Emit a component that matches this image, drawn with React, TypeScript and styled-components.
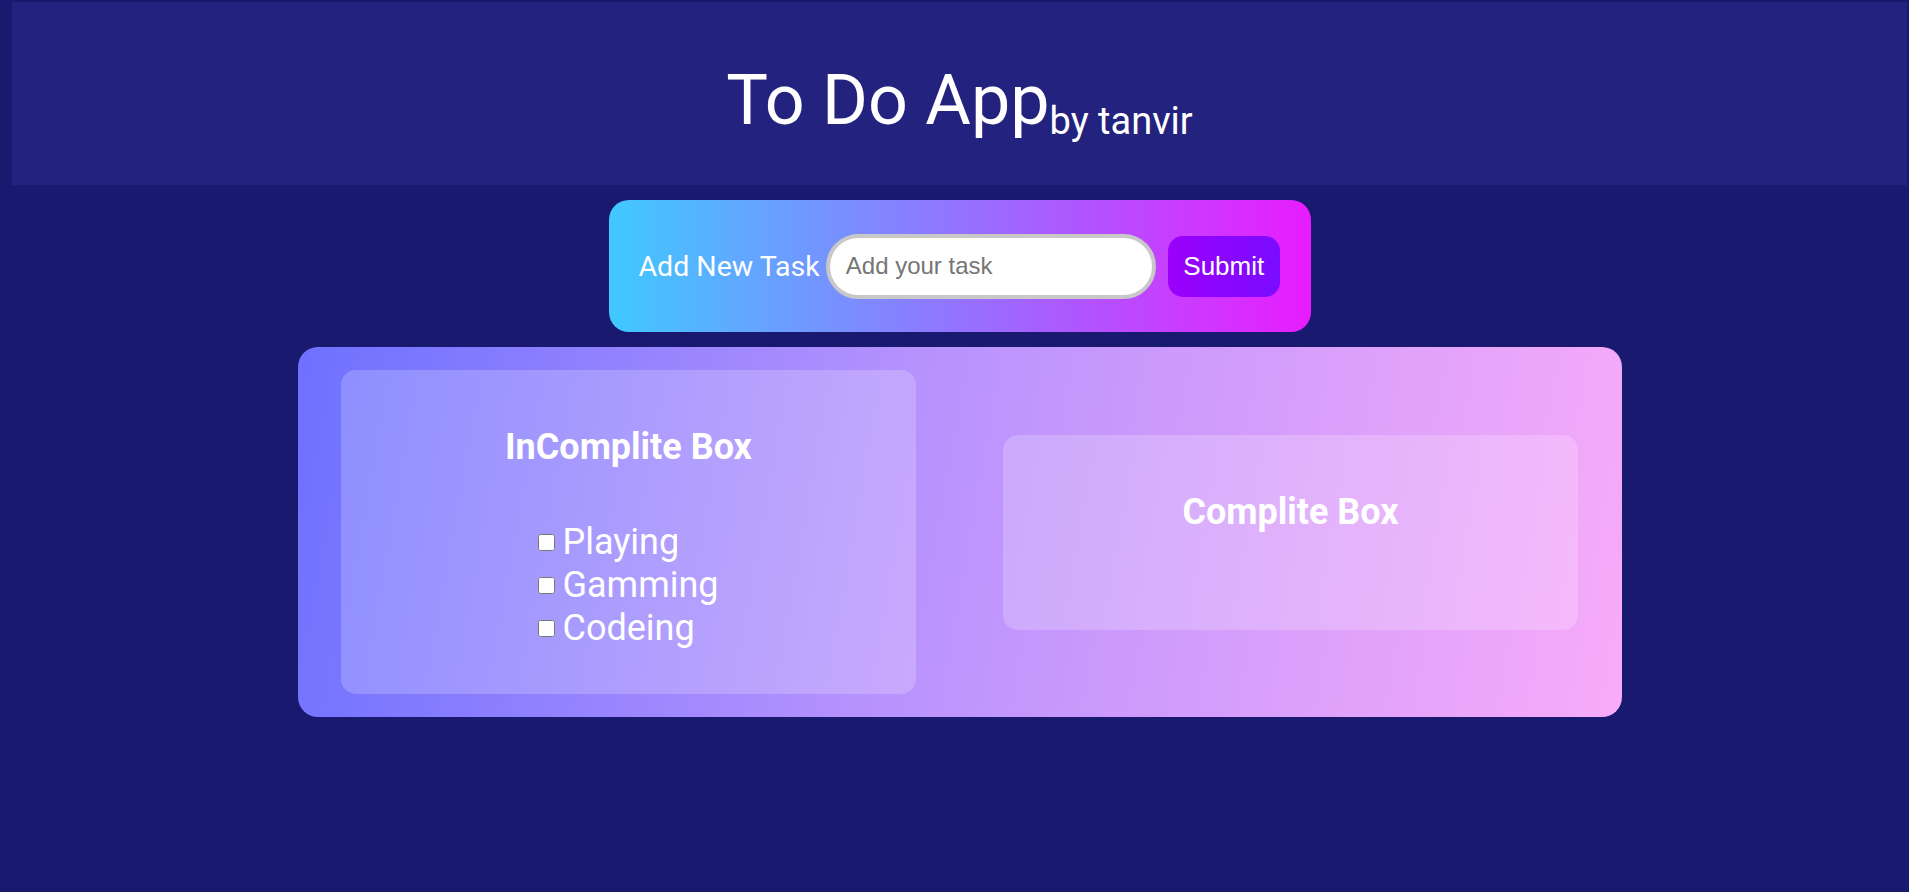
import { useState } from 'react';
import styled, { createGlobalStyle } from 'styled-components';

const GlobalStyle = createGlobalStyle`
  body {
    margin: 0 2px 0 12px;
    background-color: #191970;
    font-family: Roboto, 'Noto Sans', sans-serif;
    color: #fff;
  }
`;

const Header = styled.header`
  height: 183px;
  margin-top: 2px;
  background-color: #23237f;
  display: flex;
  justify-content: center;
  align-items: flex-start;
`;

const Title = styled.h1`
  margin: 58px 0 0;
  font-size: 70px;
  font-weight: 400;
  line-height: 80px;
  color: #fff;

  sub {
    font-size: 38px;
    vertical-align: -10px;
  }
`;

const FormCard = styled.form`
  width: 702px;
  height: 132px;
  margin: 15px auto 0;
  box-sizing: border-box;
  padding: 0 30px;
  border-radius: 20px;
  background: linear-gradient(to right, #40c9ff, #e81cff);
  display: flex;
  align-items: center;
`;

const Label = styled.label`
  font-size: 28.5px;
  color: #fff;
  margin-right: 6px;
  white-space: nowrap;
`;

const TaskInput = styled.input`
  width: 330px;
  height: 65px;
  box-sizing: border-box;
  border: 4px solid #c8c8c8;
  border-radius: 33px;
  padding: 0 16px;
  font-family: 'Liberation Sans', Arial, sans-serif;
  font-size: 24px;
  outline: none;

  &::placeholder {
    color: #757575;
  }
`;

const SubmitButton = styled.button`
  margin-left: 12px;
  width: 112px;
  height: 61px;
  border: none;
  border-radius: 15px;
  background: linear-gradient(to right, #9b00fb, #7a0cff);
  color: #fff;
  font-family: 'Liberation Sans', Arial, sans-serif;
  font-size: 26px;
  cursor: pointer;
`;

const Board = styled.section`
  width: 1324px;
  margin: 15px auto 0;
  box-sizing: border-box;
  padding: 23px 0;
  border-radius: 20px;
  background: linear-gradient(100deg, #6d71ff 0%, #b692fd 45%, #f8abf9 100%);
  display: flex;
  justify-content: space-around;
  align-items: center;
`;

const Column = styled.div`
  width: 575px;
  box-sizing: border-box;
  padding: 55px 0 44px;
  border-radius: 15px;
  background-color: rgba(255, 255, 255, 0.2);
  display: flex;
  flex-direction: column;
  align-items: center;
`;

const ColumnTitle = styled.h2`
  margin: 0 0 52px;
  font-size: 36px;
  font-weight: 700;
  line-height: 44px;
  color: #fff;
`;

const TaskList = styled.ul`
  list-style: none;
  margin: 0;
  padding: 0;
`;

const TaskRow = styled.li`
  display: flex;
  align-items: center;
  font-size: 36px;
  line-height: 43px;
  color: #fff;

  input {
    width: 17px;
    height: 17px;
    margin: 0 7px 0 0;
  }
`;

const initialTasks = ['Playing', 'Gamming', 'Codeing'];

export default function App() {
  const [value, setValue] = useState('');
  const [tasks, setTasks] = useState<string[]>(initialTasks);
  const [done, setDone] = useState<string[]>([]);

  function handleSubmit(e: React.FormEvent) {
    e.preventDefault();
    if (!value.trim()) return;
    setTasks([...tasks, value.trim()]);
    setValue('');
  }

  function complete(task: string) {
    setTasks(tasks.filter((t) => t !== task));
    setDone([...done, task]);
  }

  return (
    <>
      <GlobalStyle />
      <Header>
        <Title>
          To Do App<sub>by tanvir</sub>
        </Title>
      </Header>
      <FormCard onSubmit={handleSubmit}>
        <Label htmlFor="task">Add New Task</Label>
        <TaskInput
          id="task"
          placeholder="Add your task"
          value={value}
          onChange={(e) => setValue(e.target.value)}
        />
        <SubmitButton type="submit">Submit</SubmitButton>
      </FormCard>
      <Board>
        <Column>
          <ColumnTitle>InComplite Box</ColumnTitle>
          <TaskList>
            {tasks.map((task) => (
              <TaskRow key={task}>
                <input type="checkbox" onChange={() => complete(task)} />
                {task}
              </TaskRow>
            ))}
          </TaskList>
        </Column>
        <Column>
          <ColumnTitle>Complite Box</ColumnTitle>
          <TaskList>
            {done.map((task) => (
              <TaskRow key={task}>
                <input type="checkbox" checked readOnly />
                {task}
              </TaskRow>
            ))}
          </TaskList>
        </Column>
      </Board>
    </>
  );
}
